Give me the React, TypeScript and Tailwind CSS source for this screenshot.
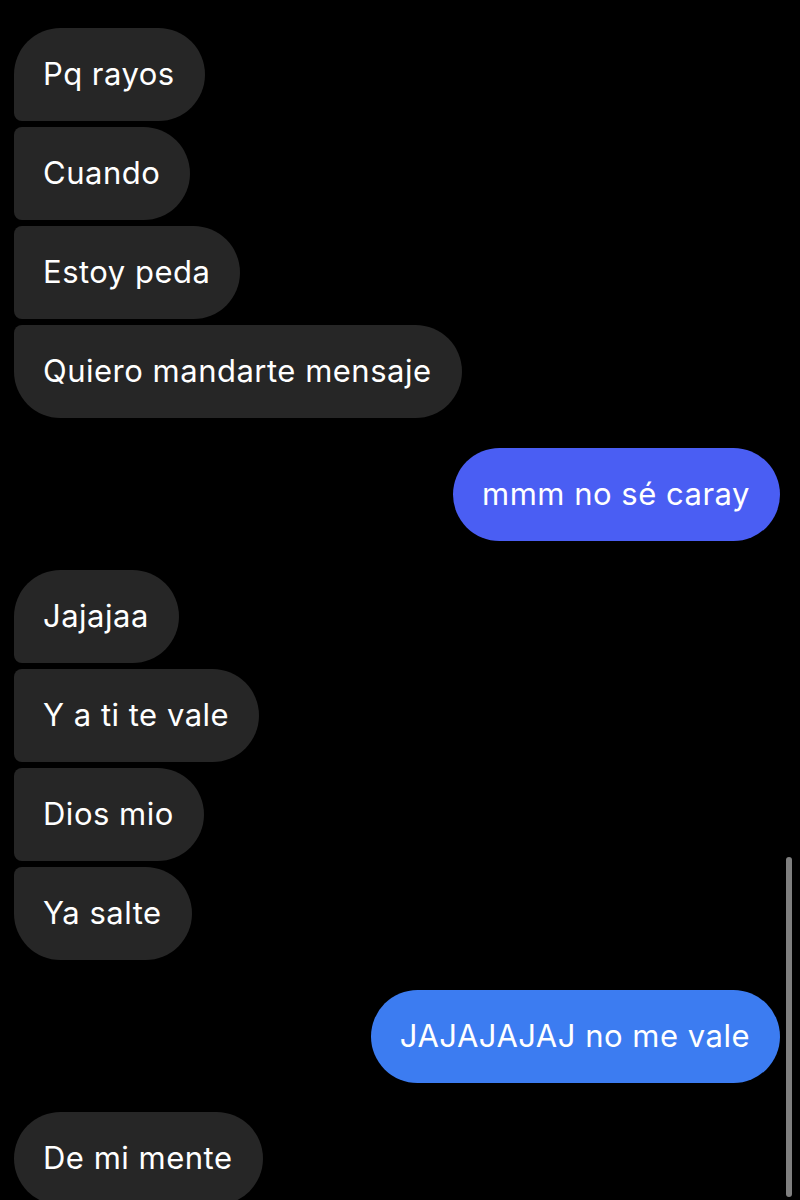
import React from 'react';

type Msg = { text: string; mine?: boolean; color?: string };

const groups: Msg[][] = [
    [{ text: 'Pq rayos' }, { text: 'Cuando' }, { text: 'Estoy peda' }, { text: 'Quiero mandarte mensaje' }],
    [{ text: 'mmm no sé caray', mine: true, color: 'bg-[#4a5ef3]' }],
    [{ text: 'Jajajaa' }, { text: 'Y a ti te vale' }, { text: 'Dios mio' }, { text: 'Ya salte' }],
    [{ text: 'JAJAJAJAJ no me vale', mine: true, color: 'bg-[#3c7cf1]' }],
    [{ text: 'De mi mente' }]
];

const leftCorners = (index: number, count: number) => {
    if (count === 1) return 'rounded-[47px]';
    if (index === 0) return 'rounded-r-[47px] rounded-tl-[47px] rounded-bl-[8px]';
    if (index === count - 1) return 'rounded-r-[47px] rounded-tl-[8px] rounded-bl-[47px]';
    return 'rounded-r-[47px] rounded-l-[8px]';
};

const Bubble = ({ msg, index, count }: { msg: Msg; index: number; count: number }) => (
    <div className={msg.mine ? 'flex justify-end' : 'flex justify-start'}>
        <div
            className={`h-[93px] flex items-center pl-[29px] pr-[30px] text-[31px] tracking-[0.5px] text-white ${
                msg.mine ? `${msg.color} rounded-[47px]` : `bg-[#262626] ${leftCorners(index, count)}`
            }`}
        >
            {msg.text}
        </div>
    </div>
);

export default function App() {
    return (
        <div className="relative w-[800px] h-[1200px] overflow-hidden bg-black font-['Inter','Liberation_Sans',sans-serif]">
            <div className="flex flex-col gap-[29.5px] pt-[28px] pl-[14px] pr-[20px]">
                {groups.map((group, g) => (
                    <div key={g} className="flex flex-col gap-[6px]">
                        {group.map((msg, i) => <Bubble key={i} msg={msg} index={i} count={group.length} />)}
                    </div>
                ))}
            </div>
            {/* scroll indicator */}
            <div className="absolute left-[786px] top-[857px] w-[6px] h-[340px] rounded-full bg-[#7f7f7f]" />
        </div>
    );
}
